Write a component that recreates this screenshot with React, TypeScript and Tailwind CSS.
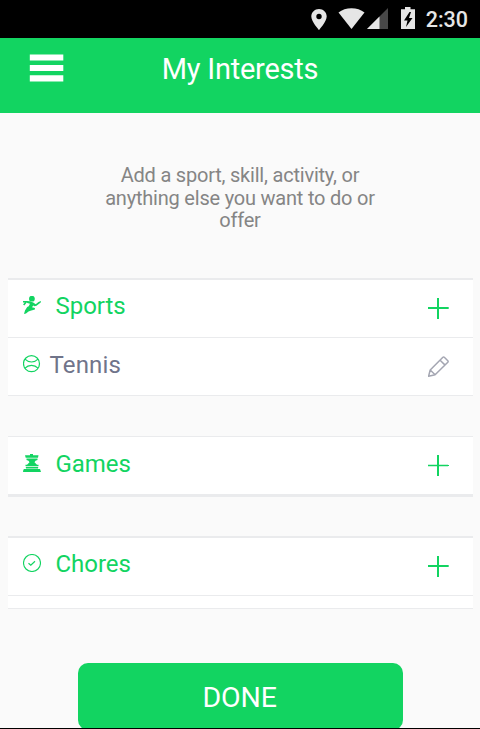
import React from "react";

interface SectionProps {
  title: string;
  icon: React.ReactNode;
  className?: string;
  thinPlus?: boolean;
  children?: React.ReactNode;
}

const StatusBar: React.FC = () => (
  <div className="flex h-[38px] shrink-0 items-start bg-black pr-[12px] text-[#e6e6e6]">
    <svg width="104" height="22" viewBox="0 0 104 22" className="mt-[8px] ml-auto overflow-visible" fill="currentColor">
      <path
        fillRule="evenodd"
        d="M8 1C3.7 1 .3 4.3.3 8.500 .3 13.500 8 22 8 22s7.700-8.500 7.700-13.500C15.700 4.300 12.300 1 8 1Zm0 4.800a2.700 2.700 0 1 1 0 5.400 2.700 2.700 0 0 1 0-5.400Z"
      />
      <path d="M27.500 4.500C31 1.700 35.500.2 40.500.2s9.500 1.500 13 4.300L40.500 21Z" />
      <path d="M77 0v21H56Z" className="fill-[#484848]" />
      <path d="M68.500 8.500V21H56Z" />
      <path fillRule="evenodd" d="M94 -1h5.500V1.300H104V21H90V1.300h4ZM98.500 4l-5.500 8.500h3.500L95 19l6.500-9H98L100 4Z" />
    </svg>
    <span className="ml-[11px] mt-[7px] text-[21.500px] leading-[26px] font-medium">2:30</span>
  </div>
);

const RunnerIcon: React.FC = () => (
  <svg width="18" height="18" viewBox="0 0 18 18" fill="none" stroke="currentColor">
    <circle cx="8.900" cy="2.700" r="2.900" fill="currentColor" stroke="none" />
    <path d="M0 5.700h4.500M.7 9 3 6.300" strokeWidth="1.600" />
    <path d="m3.500 5 3.500.3 3.200 1.200 2.500 1.700L15.500 6l2.500-1-.3 1.500-4.200 3.300-2 .4-1.300-.6-1.200 1.600 2.900.8v1.500l-4.400 1.300-2 .6L3 17.500 1 18l1-3.500 2.200-3.500 1.500-.7L7 7.700l-2.800-.8Z" fill="currentColor" stroke="none" />
  </svg>
);

const ChessIcon: React.FC = () => (
  <svg width="18" height="18" viewBox="0 0 18 18" fill="currentColor">
    <path d="M7 0h3v1.200h5.500L15 3.700H2.700L2 1.200h5ZM3.500 4.500h11v1.500l-2 .7-1 1.500 2.500 2.500h1.500v1.300h-13v-1.300H4l2.500-2.500-1-1.500-2-.7ZM2.700 12.700h12.600l-.3 1.800H3ZM1 15h16l1 3H0l.3-2Z" />
  </svg>
);

const CheckIcon: React.FC = () => (
  <svg width="18" height="18" viewBox="0 0 18 18" fill="none" stroke="currentColor">
    <circle cx="9" cy="9" r="8.500" strokeWidth="1.100" />
    <path d="m5.500 9.200 2.300 2 4.200-4" strokeWidth="1.200" />
  </svg>
);

const BallIcon: React.FC = () => (
  <svg width="18" height="18" viewBox="0 0 18 18" fill="none" stroke="currentColor" strokeWidth="1.200">
    <circle cx="8.500" cy="8.700" r="8" />
    <path d="M2 4.200c3.500 3.700 9.500 3.700 13 0M2 13.200c3.500-3.700 9.500-3.700 13 0" />
  </svg>
);

const PencilIcon: React.FC = () => (
  <svg width="22" height="22" viewBox="0 0 22 22" fill="none" stroke="currentColor" strokeWidth="1.500" strokeLinejoin="round">
    <path d="m.6 20.200 1.600-6.200L14.900 1.300q.7-.7 1.400 0l3.500 3.500q.7.700 0 1.400L7.100 18.700ZM2.200 14l4.900 4.700M12.100 4.200l5 4.900" />
  </svg>
);

const PlusIcon: React.FC<{ thin?: boolean }> = ({ thin }) => (
  <svg width="22" height="22" viewBox="0 0 22 22" fill="none" stroke="currentColor">
    <path d="M10 0v21" strokeWidth="2" />
    {thin ? (
      <>
        <path d="M0 10.500h20" strokeWidth="3" opacity=".25" />
        <path d="M0 10.500h21" />
      </>
    ) : (
      <path d="M0 10h20.700" strokeWidth="2" />
    )}
  </svg>
);

const Section: React.FC<SectionProps> = ({ title, icon, className = "", thinPlus, children }) => (
  <section className={`mr-[7px] ml-[8px] shrink-0 border-[#eaebed] bg-white ${className}`}>
    <div className="flex h-[57px] items-start pl-[15px] pr-[23px] text-[#12d461]">
      <div className={thinPlus ? "mt-[17px] w-[32.500px]" : "mt-[16px] w-[32.500px]"}>{icon}</div>
      <h2 className={`text-[24px] leading-[28px] tracking-[-0.050px] ${thinPlus ? "mt-[13px]" : "mt-[12px]"}`}>{title}</h2>
      <button className="mt-[18px] ml-auto" aria-label={`Add to ${title}`}>
        <PlusIcon thin={thinPlus} />
      </button>
    </div>
    {children}
  </section>
);

const App: React.FC = () => (
  <div className="flex h-[729px] w-[480px] flex-col overflow-hidden border-b border-black bg-[#fafafa] font-[Roboto,sans-serif]">
    <StatusBar />
    <header className="grid h-[75px] shrink-0 grid-cols-[1fr_auto_1fr] items-start bg-[#12d461] text-white">
      <button className="mt-[16px] ml-[29px] w-[35px]" aria-label="Menu">
        <svg width="35" height="28" viewBox="0 0 35 28" fill="currentColor">
          <path d="M.8.400h33.500v6.200H.8ZM.8 11h33.500v6.100H.8ZM.8 21.200h33.500v6.300H.8Z" />
        </svg>
      </button>
      <h1 className="mt-[13px] text-[29px] leading-[36px] tracking-[-0.220px]">My Interests</h1>
    </header>

    <p className="mx-auto mt-[51px] h-[70px] w-[290px] shrink-0 text-center text-[20px] leading-[22.500px] tracking-[-0.210px] text-[#858585]">
      Add a sport, skill, activity, or
      <br />
      anything else you want to do or
      <br />
      offer
    </p>

    <Section title="Sports" icon={<RunnerIcon />} className="mt-[44px] border-t-2 border-b">
      <div className="flex h-[58px] items-start border-t border-[#eaebed] pl-[15px] pr-[23px]">
        <div className="mt-[17px] w-[26.500px] text-[#12d461]">
          <BallIcon />
        </div>
        <span className="mt-[13px] text-[24px] leading-[28px] tracking-[0.150px] text-[#70748a]">Tennis</span>
        <button className="mt-[18px] ml-auto text-[#a4a6b2]" aria-label="Edit Tennis">
          <PencilIcon />
        </button>
      </div>
    </Section>

    <Section title="Games" icon={<ChessIcon />} className="mt-[40px] border-t border-b-[3px]" thinPlus />

    <Section title="Chores" icon={<CheckIcon />} className="mt-[39px] border-t-2 border-b">
      <div className="h-[13px] border-t border-[#eaebed]" />
    </Section>

    <button className="mt-[54.400px] ml-[78px] h-[67px] w-[325.400px] shrink-0 rounded-[10px] bg-[#12d461] pt-[2px] pr-[2px] text-[28.500px] leading-[36px] tracking-[-0.1px] text-white">
      DONE
    </button>
  </div>
);

export default App;
